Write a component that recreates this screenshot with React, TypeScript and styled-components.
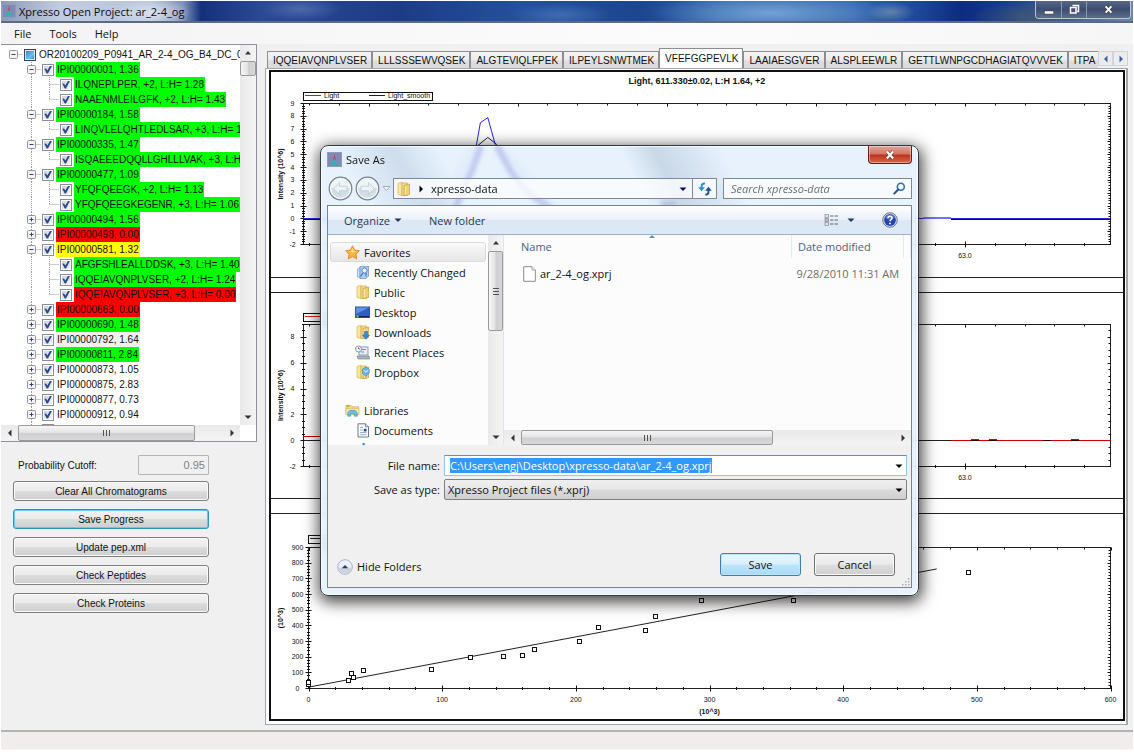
import React, { useLayoutEffect, useRef, useState } from "react";
import styled, { createGlobalStyle, css } from "styled-components";

const sans = `"Liberation Sans", sans-serif`;
const segoe = `"Open Sans", "Noto Sans", sans-serif`;

const GlobalStyle = createGlobalStyle`
  * { box-sizing: border-box; }
  body { margin: 0; background: #fff; font: 10px ${sans}; color: #111; }
  button, input, select { font: inherit; color: inherit; margin: 0; padding: 0; border-radius: 0; }
`;

/* ---------- main window ---------- */

const Window = styled.div`
  position: relative;
  display: flex;
  flex-direction: column;
  padding: 1px 1px 0;
  overflow: hidden;
`;

const TitleBar = styled.header`
  display: flex;
  align-items: center;
  height: 22px;
  padding-left: 1px;
  font: 11px ${segoe};
  border-bottom: 2px solid #5c6a86;
  background:
    radial-gradient(40px 14px at 150px 12px, rgba(220, 228, 240, 0.9), transparent),
    radial-gradient(120px 20px at 770px 12px, rgba(130, 175, 222, 0.8), transparent),
    radial-gradient(24px 10px at 890px 11px, rgba(110, 140, 180, 0.8), transparent),
    radial-gradient(40px 12px at 300px 8px, rgba(90, 120, 185, 0.7), transparent),
    radial-gradient(50px 12px at 560px 14px, rgba(80, 130, 200, 0.6), transparent),
    radial-gradient(60px 16px at 1030px 16px, rgba(70, 90, 110, 0.8), transparent),
    linear-gradient(90deg, #8c9ab4 0, #c3cde0 60px, #b6c3da 150px, #8294bd 182px, #14307c 200px,
      #2a4a94 260px, #1c3c86 400px, #25509c 520px, #1d4590 640px, #2f66ac 720px, #3468b0 850px,
      #1c4696 920px, #0c2c80 960px, #143a8c 1000px, #6f86a8 100%);
`;

const WindowTitle = styled.h1`
  flex: 1;
  margin: 0 0 0 3px;
  font-size: 11px;
  font-weight: 400;
  color: #0a0a14;
`;

const CaptionButtons = styled.div`
  display: flex;
  align-self: flex-start;
  height: 18px;
  margin-right: 2px;
  border: 1px solid #b9c4d6;
  border-top: 0;
  border-radius: 0 0 4px 4px;
  overflow: hidden;
`;

const CaptionButton = styled.button<{ $wide?: boolean }>`
  display: flex;
  align-items: center;
  justify-content: center;
  width: ${(p) => (p.$wide ? 44 : 25)}px;
  border: 0;
  background: linear-gradient(#56678a, #3d4d70 50%, #5d6d8a);
  & + & { border-left: 1px solid #8b98ae; }
`;

const MenuBar = styled.nav`
  display: flex;
  align-items: center;
  height: 21px;
  padding-left: 4px;
  font: 11px ${segoe};
  background: linear-gradient(90deg, #f3f3f5, #fcfcfc 60%, #f6f6f6);
`;

const MenuButton = styled.button`
  border: 0;
  padding: 0 9px;
  background: none;
`;

const Main = styled.main`
  display: grid;
  grid-template-columns: 256px minmax(0, 1fr);
  column-gap: 8px;
  padding-right: 5px;
  background: #f0f0f0;
`;

const StatusBar = styled.footer`
  height: 20px;
  border-top: 2px solid #b4b4b4;
  border-bottom: 1px solid #f7f5f5;
  background: #f0edec;
`;

/* ---------- tree ---------- */

const TreePanel = styled.section`
  display: grid;
  grid-template-columns: minmax(0, 1fr) 16px;
  grid-template-rows: 380px 16px;
  border: 1px solid #8e929c;
  border-left: 0;
  background: #fff;
`;

const TreeList = styled.ul`
  margin: 0;
  padding: 2px 0 0;
  list-style: none;
  overflow: hidden;
`;

const TreeRow = styled.li`
  display: flex;
  align-items: center;
  height: 15px;
  white-space: nowrap;
`;

const Guide = styled.span`
  flex: none;
  display: flex;
`;

const GuideButton = styled.button`
  flex: none;
  display: flex;
  border: 0;
  background: none;
`;

const TreeCheck = styled.input<{ $partial?: boolean }>`
  appearance: none;
  flex: none;
  position: relative;
  width: 12px;
  height: 12px;
  border: 1px solid #8a8f97;
  background: linear-gradient(135deg, #cdd2d8, #f4f5f6);
  box-shadow: inset 0 0 0 1px #fff;
  ${(p) =>
    p.$partial
      ? css`
          border-color: #345;
          background: linear-gradient(135deg, #1c7fb8, #6cc3ea 60%, #2a77a8);
          box-shadow: inset 0 0 0 1px #dfe8ee;
        `
      : css`
          &:checked::after {
            content: "";
            position: absolute;
            inset: 1px;
            background: #2c4a8c;
            clip-path: polygon(4% 42%, 26% 36%, 42% 62%, 78% 0, 100% 4%, 50% 100%, 34% 100%);
          }
        `}
`;

const TreeLabel = styled.label<{ $fill?: string }>`
  height: 15px;
  margin-left: 2px;
  padding: 0 1px;
  line-height: 15px;
  background: ${(p) => p.$fill ?? "transparent"};
`;

/* ---------- scrollbars ---------- */

const ScrollTrack = styled.div<{ $vertical?: boolean }>`
  display: flex;
  flex-direction: ${(p) => (p.$vertical ? "column" : "row")};
  background: ${(p) => (p.$vertical ? "linear-gradient(90deg,#e9e9e9,#f4f4f4)" : "linear-gradient(#e9e9e9,#f4f4f4)")};
`;

const ScrollArrow = styled.button<{ $vertical?: boolean }>`
  flex: none;
  display: flex;
  align-items: center;
  justify-content: center;
  width: ${(p) => (p.$vertical ? 15 : 17)}px;
  height: ${(p) => (p.$vertical ? 16 : 15)}px;
  border: 0;
  background: none;
`;

const ScrollThumb = styled.div<{ $vertical?: boolean; $share: number }>`
  flex: 0 0 ${(p) => p.$share}%;
  display: flex;
  align-items: center;
  justify-content: center;
  border: 1px solid #9a9a9a;
  border-radius: 2px;
  background: linear-gradient(${(p) => (p.$vertical ? "90deg" : "180deg")}, #f6f6f6, #e4e4e6 45%, #cfcfd2 55%, #d8d8da);
`;

const ScrollRest = styled.div`
  flex: 1;
`;

const arrows = {
  up: "M1 5.5 4 2 7 5.5z",
  down: "M.5 2.5 4 6 7.5 2.5z",
  left: "M5.5 0.5 2 4 5.5 7.5z",
  right: "M2.5 0.5 6 4 2.5 7.5z",
};

const Arrow = ({ dir, color = "#333" }: { dir: keyof typeof arrows; color?: string }) => (
  <svg width="8" height="8" viewBox="0 0 8 8">
    <path d={arrows[dir]} fill={color} />
  </svg>
);

const Grip = ({ vertical }: { vertical?: boolean }) => (
  <svg width="8" height="8" viewBox="0 0 8 8">
    <path
      d={vertical ? "M1 1.5h6M1 4.5h6M1 7.5h6" : "M1.5 1v6M4.5 1v6M7.5 1v6"}
      stroke="#555"
      strokeWidth="1"
    />
  </svg>
);

const Scrollbar = ({ vertical, share }: { vertical?: boolean; share: number }) => (
  <ScrollTrack $vertical={vertical}>
    <ScrollArrow type="button" $vertical={vertical} aria-label={vertical ? "Scroll up" : "Scroll left"}>
      <Arrow dir={vertical ? "up" : "left"} />
    </ScrollArrow>
    <ScrollThumb $vertical={vertical} $share={share}>
      {share > 10 && <Grip vertical={vertical} />}
    </ScrollThumb>
    <ScrollRest />
    <ScrollArrow type="button" $vertical={vertical} aria-label={vertical ? "Scroll down" : "Scroll right"}>
      <Arrow dir={vertical ? "down" : "right"} />
    </ScrollArrow>
  </ScrollTrack>
);

type Node = { level: 0 | 1 | 2; text: string; fill?: string; open?: boolean; last?: boolean };

const green = "#00ff00";
const red = "#ff0000";

const nodes: Node[] = [
  { level: 0, text: "OR20100209_P0941_AR_2-4_OG_B4_DC_0", open: true },
  { level: 1, text: "IPI00000001, 1.36", fill: green, open: true },
  { level: 2, text: "ILQNEPLPER, +2, L:H= 1.28", fill: green },
  { level: 2, text: "NAAENMLEILGFK, +2, L:H= 1.43", fill: green, last: true },
  { level: 1, text: "IPI00000184, 1.58", fill: green, open: true },
  { level: 2, text: "LINQVLELQHTLEDLSAR, +3, L:H= 1", fill: green, last: true },
  { level: 1, text: "IPI00000335, 1.47", fill: green, open: true },
  { level: 2, text: "ISQAEEEDQQLLGHLLLVAK, +3, L:H", fill: green, last: true },
  { level: 1, text: "IPI00000477, 1.09", fill: green, open: true },
  { level: 2, text: "YFQFQEEGK, +2, L:H= 1.13", fill: green },
  { level: 2, text: "YFQFQEEGKEGENR, +3, L:H= 1.06", fill: green, last: true },
  { level: 1, text: "IPI00000494, 1.56", fill: green },
  { level: 1, text: "IPI00000498, 0.00", fill: red },
  { level: 1, text: "IPI00000581, 1.32", fill: "#ffff00", open: true },
  { level: 2, text: "AFGFSHLEALLDDSK, +3, L:H= 1.40", fill: green },
  { level: 2, text: "IQQEIAVQNPLVSER, +2, L:H= 1.24", fill: green },
  { level: 2, text: "IQQEIAVQNPLVSER, +3, L:H= 0.00", fill: red, last: true },
  { level: 1, text: "IPI00000663, 0.00", fill: red },
  { level: 1, text: "IPI00000690, 1.48", fill: green },
  { level: 1, text: "IPI00000792, 1.64", fill: "#f0f0f0" },
  { level: 1, text: "IPI00000811, 2.84", fill: green },
  { level: 1, text: "IPI00000873, 1.05" },
  { level: 1, text: "IPI00000875, 2.83" },
  { level: 1, text: "IPI00000877, 0.73" },
  { level: 1, text: "IPI00000912, 0.94" },
  { level: 1, text: "" },
];

const guideWidth = [23, 41, 59];

const GuideLines = ({ node }: { node: Node }) => {
  const x = [12.5, 30.5, 48.5][node.level];
  const line = { stroke: "#9a9a9a", strokeDasharray: "1 1" };
  return (
    <svg width={guideWidth[node.level]} height="15">
      {node.level > 0 && <path d="M30.5 0v15" {...line} />}
      {node.level === 2 && <path d={`M48.5 0v${node.last ? 8 : 15}`} {...line} />}
      <path d={`M${x} 7.5h9`} {...line} />
      {node.level < 2 && (
        <>
          <rect x={x - 4} y="3.5" width="8" height="8" rx="1" fill="#f4f4f4" stroke="#959595" />
          <path d={`M${x - 2} 7.5h4${node.open ? "" : "m-2 -2v4"}`} stroke="#2a4480" />
        </>
      )}
    </svg>
  );
};

const Tree = () => (
  <TreePanel aria-label="Proteins">
    <TreeList>
      {nodes.map((node, i) => (
        <TreeRow key={i}>
          {node.level < 2 ? (
            <GuideButton aria-label={node.open ? "Collapse" : "Expand"}>
              <GuideLines node={node} />
            </GuideButton>
          ) : (
            <Guide>
              <GuideLines node={node} />
            </Guide>
          )}
          <TreeCheck
            type="checkbox"
            id={`node-${i}`}
            aria-label={node.text || "Protein"}
            defaultChecked={node.level > 0}
            $partial={node.level === 0}
          />
          {node.text && (
            <TreeLabel htmlFor={`node-${i}`} $fill={node.fill}>
              {node.text}
            </TreeLabel>
          )}
        </TreeRow>
      ))}
    </TreeList>
    <Scrollbar vertical share={4} />
    <Scrollbar share={74} />
  </TreePanel>
);

/* ---------- left controls ---------- */

const Controls = styled.form`
  display: grid;
  gap: 8px;
  padding: 13px 48px 0 12px;
`;

const CutoffRow = styled.div`
  display: flex;
  align-items: center;
  justify-content: space-between;
  height: 20px;
  margin-bottom: -2px;
  padding-left: 5px;
`;

const CutoffInput = styled.input`
  width: 71px;
  height: 20px;
  padding-right: 3px;
  border: 1px solid #b4b4b4;
  border-radius: 1px;
  background: #f0f0f0;
  color: #808080;
  font-size: 11px;
  text-align: right;
`;

const PushButton = styled.button<{ $focus?: boolean }>`
  height: 20px;
  border: 1px solid ${(p) => (p.$focus ? "#2a93c0" : "#808080")};
  border-radius: 3px;
  background: linear-gradient(#f3f3f3, #ebebeb 48%, #dcdcdc 52%, #cecece);
  box-shadow: inset 0 0 0 1px ${(p) => (p.$focus ? "#5fcdf0" : "#fafafa")};
`;

/* ---------- tabs ---------- */

const Workspace = styled.section`
  display: flex;
  flex-direction: column;
  padding: 4px 0 5px;
`;

const TabStrip = styled.div`
  display: flex;
  align-items: flex-end;
  height: 20px;
  padding-left: 2px;
`;

const TabClip = styled.div`
  flex: 1;
  display: flex;
  align-items: flex-end;
  overflow: hidden;
`;

const Tab = styled.button<{ $active?: boolean }>`
  flex: none;
  height: ${(p) => (p.$active ? 20 : 17)}px;
  padding: 0 4px 0 5px;
  border: 1px solid #8c8e94;
  border-bottom: 0;
  & + & { border-left-width: ${(p) => (p.$active ? 1 : 0)}px; }
  background: ${(p) => (p.$active ? "#fff" : "linear-gradient(#f4f4f4, #ececec 50%, #dedede 55%, #dadada)")};
`;

const TabScroll = styled.button`
  flex: none;
  display: flex;
  align-items: center;
  justify-content: center;
  width: 15px;
  height: 15px;
  margin-bottom: 2px;
  border: 1px solid #cfd3da;
  background: #ececef;
`;

const TabPanel = styled.div`
  padding: 1px 1px 3px 3px;
  border: 1px solid #a2a5ad;
  border-right-width: 2px;
  background: #fff;
`;

const Frame = styled.div`
  display: grid;
  gap: 14px;
  border: 2px solid #111;
`;

const ChartCell = styled.div`
  height: 206px;
  border-bottom: 1px solid #222;
  & + & { height: 207px; border-top: 1px solid #222; }
  & + &:last-child { height: 206px; border-bottom: 0; }
  svg { display: block; }
`;

const tabs = [
  "IQQEIAVQNPLVSER",
  "LLLSSSEWVQSEK",
  "ALGTEVIQLFPEK",
  "ILPEYLSNWTMEK",
  "VFEFGGPEVLK",
  "LAAIAESGVER",
  "ALSPLEEWLR",
  "GETTLWNPGCDHAGIATQVVVEK",
  "ITPA",
];

/* ---------- charts ---------- */

type Axis = { min: number; max: number; major: number; parts: number; labels: number[]; digits?: number };
type Scale = (v: number) => number;

type ChartProps = {
  x: Axis;
  y: Axis;
  left: number;
  top: number;
  bottom: number;
  title?: string;
  yTitle: string;
  xTitle?: string;
  legend?: React.ReactNode;
  legendWidth: number;
  legendTop: number;
  plot: (sx: Scale, sy: Scale) => React.ReactNode;
};

const ticks = (a: Axis) => {
  const step = a.major / a.parts;
  const out: { v: number; major: boolean }[] = [];
  for (let i = Math.ceil(a.min / step - 1e-6); i * step <= a.max + 1e-6; i++) {
    out.push({ v: i * step, major: i % a.parts === 0 });
  }
  return out;
};

const Chart = ({ x, y, left, top, bottom, title, yTitle, xTitle, legend, legendWidth, legendTop, plot }: ChartProps) => {
  const ref = useRef<HTMLDivElement>(null);
  const [width, setWidth] = useState(851);
  useLayoutEffect(() => {
    const el = ref.current;
    if (!el) return;
    const measure = () => setWidth(el.clientWidth);
    measure();
    const ro = new ResizeObserver(measure);
    ro.observe(el);
    return () => ro.disconnect();
  }, []);

  const right = width - 12.5;
  const sx: Scale = (v) => left + ((v - x.min) / (x.max - x.min)) * (right - left);
  const sy: Scale = (v) => bottom - ((v - y.min) / (y.max - y.min)) * (bottom - top);
  const mid = (left + right) / 2;
  const yMid = (top + bottom) / 2;
  const xTicks = ticks(x)
    .map(({ v, major }) => {
      const p = Math.round(sx(v)) + 0.5;
      const n = major ? 3 : 1.5;
      return `M${p} ${bottom - n}V${bottom + n}M${p} ${top}v${major ? 3 : 2}`;
    })
    .join("");
  const yTicks = ticks(y)
    .map(({ v, major }) => {
      const p = Math.floor(sy(v)) + 0.5;
      const n = major ? 3 : 1.5;
      return `M${left - n} ${p}H${left + n}M${right} ${p}h${major ? -3 : -2}`;
    })
    .join("");

  return (
    <ChartCell ref={ref}>
      <svg width={width} height="205" fontFamily={sans} fontSize="7" fill="#111">
        <rect x={left} y={top} width={right - left} height={bottom - top} fill="none" stroke="#222" />
        <path d={xTicks + yTicks} stroke="#111" fill="none" />
        {plot(sx, sy)}
        <rect x={left} y={legendTop} width={legendWidth} height="8" fill="#fff" stroke="#111" />
        {legend}
        {title && (
          <text x={mid - 10} y="12" fontSize="9" fontWeight="700" textAnchor="middle">
            {title}
          </text>
        )}
        {x.labels.map((v) => (
          <text key={v} x={sx(v)} y={bottom + 13} textAnchor="middle">
            {v.toFixed(x.digits ?? 0)}
          </text>
        ))}
        {y.labels.map((v) => (
          <text key={v} x={left - 11} y={sy(v) + 2} textAnchor="middle">
            {v}
          </text>
        ))}
        <text transform={`translate(12 ${yMid}) rotate(-90)`} fontWeight="700" textAnchor="middle">
          {yTitle}
        </text>
        {xTitle && (
          <text x={mid} y={bottom + 25} fontWeight="700" textAnchor="middle">
            {xTitle}
          </text>
        )}
      </svg>
    </ChartCell>
  );
};

const timeAxis: Axis = { min: 60.782, max: 63.488, major: 0.5, parts: 5, labels: [63], digits: 1 };

const points = [
  [0, 20], [0, 35], [30.1, 49], [32.4, 90], [34.3, 65], [41.4, 110], [92.6, 119], [121.4, 192],
  [146.4, 199], [160.3, 205], [169.6, 245], [203.1, 299], [217.4, 389], [252.3, 365], [260.1, 454],
  [294.4, 557], [363.1, 557], [494.2, 736],
];

const path = (data: number[][], sx: Scale, sy: Scale) => "M" + data.map(([a, b]) => `${sx(a)} ${sy(b)}`).join("L");

const Charts = () => (
  <Frame>
    <Chart
      x={timeAxis}
      y={{ min: -2, max: 9, major: 1, parts: 5, labels: [9, 8, 7, 6, 5, 4, 3, 2, 1, 0, -1, -2] }}
      left={32.5}
      top={31.5}
      bottom={172.5}
      title="Light, 611.330±0.02, L:H 1.64, +2"
      yTitle="Intensity (10^6)"
      legendWidth={129}
      legendTop={20.5}
      legend={
        <>
          <path d="M34 23.5h16" stroke="#3c3cff" />
          <path d="M98 23.5h16" stroke="#222" />
          <text x="53" y="26">Light</text>
          <text x="117" y="26">Light_smooth</text>
        </>
      }
      plot={(sx, sy) => {
        const zero = Math.floor(sy(0));
        return (
          <>
            <path d={path([[61.21, 0.1], [61.36, 5.6], [61.4, 6.35], [61.43, 5.8], [61.65, 0.2]], sx, sy)} fill="none" stroke="#222" />
            <path d={path([[61.22, 0.1], [61.36, 5.5], [61.375, 7.5], [61.4, 7.9], [61.425, 5.8], [61.62, 0.4]], sx, sy)} fill="none" stroke="#2222ff" />
            <path d={`M${sx(60.782)} ${zero + 0.5}H${sx(63.488)}`} stroke="#2a2af0" />
            <path d={`M${sx(60.782)} ${zero + 1.5}h80M${sx(62.953)} ${zero + 1.5}H${sx(63.488)}`} stroke="#00003c" />
            <path d={`M${sx(62.86)} ${zero}H${sx(62.953)}`} stroke="#7070ff" strokeWidth="2" />
          </>
        );
      }}
    />
    <Chart
      x={timeAxis}
      y={{ min: -2, max: 9, major: 2, parts: 4, labels: [8, 6, 4, 2, 0, -2] }}
      left={32.5}
      top={31.5}
      bottom={173.5}
      yTitle="Intensity (10^6)"
      legendWidth={129}
      legendTop={20.5}
      legend={<path d="M34 23.5h16" stroke="#e22" />}
      plot={(sx, sy) => {
        const zero = Math.floor(sy(0));
        return (
          <>
            <path d={`M${sx(60.782)} ${zero + 0.5}H${sx(63.488)}`} stroke="#222" />
            <path d={`M${sx(60.782)} ${zero - 3.5}h18M${sx(62.953)} ${zero + 0.5}H${sx(63.488)}`} stroke="#d00000" />
            <path d={`M${sx(63.02)} ${zero - 0.5}h8m10 0h8m74 0h8`} stroke="#d00000" />
            <path d={`M${sx(63.02)} ${zero + 0.5}h8m10 0h8m46 0h8m20 0h8`} stroke="#300" />
          </>
        );
      }}
    />
    <Chart
      x={{ min: 0, max: 600, major: 100, parts: 5, labels: [0, 100, 200, 300, 400, 500, 600] }}
      y={{ min: 0, max: 900, major: 100, parts: 5, labels: [900, 800, 700, 600, 500, 400, 300, 200, 100, 0] }}
      left={37.5}
      top={33.5}
      bottom={174.5}
      yTitle="(10^3)"
      xTitle="(10^3)"
      legendWidth={60}
      legendTop={21.5}
      legend={<path d="M39 24.5h14" stroke="#222" />}
      plot={(sx, sy) => (
        <>
          <path d={path([[1, 10], [470, 763]], sx, sy)} stroke="#222" fill="none" />
          {points.map(([a, b], i) => (
            <rect key={i} x={Math.round(sx(a)) - 2.5} y={Math.round(sy(b)) - 2.5} width="4" height="4" fill="#fff" stroke="#111" />
          ))}
        </>
      )}
    />
  </Frame>
);

/* ---------- dialog ---------- */

const Dialog = styled.div`
  position: absolute;
  left: 320px;
  top: 145px;
  display: flex;
  flex-direction: column;
  width: 599px;
  padding: 0 6px 7px;
  border: 1px solid #333a44;
  border-radius: 8px;
  font: 11px ${segoe};
  background:
    linear-gradient(62deg, transparent 0, transparent 290px, rgba(165, 185, 205, 0.45) 320px, rgba(185, 200, 218, 0.35) 350px, transparent 380px) no-repeat 0 0 / 100% 60px,
    linear-gradient(60deg, transparent 40px, rgba(170, 190, 210, 0.4) 90px, transparent 130px) no-repeat 0 0 / 100% 60px,
    rgba(226, 239, 252, 0.82);
  backdrop-filter: blur(4px);
  box-shadow: inset 0 0 0 1px rgba(255, 255, 255, 0.7), 1px 4px 16px 2px rgba(0, 0, 0, 0.75);
`;

const GlassTint = styled.span`
  position: absolute;
  inset: 0 0 auto 0;
  height: 60px;
  overflow: hidden;
  pointer-events: none;
`;

const DialogTitleRow = styled.div`
  position: relative;
  display: flex;
  align-items: flex-start;
  gap: 4px;
  height: 32px;
  svg { flex: none; }
`;

const AppIconSlot = styled.span`
  display: flex;
  padding-top: 6px;
`;

const DialogTitle = styled.h2`
  flex: 1;
  margin: 0;
  padding-top: 6px;
  font-size: 11px;
  line-height: 15px;
  font-weight: 400;
`;

const CloseButton = styled.button`
  display: flex;
  align-items: center;
  justify-content: center;
  width: 44px;
  height: 18px;
  border: 1px solid #5e2018;
  border-top: 0;
  border-radius: 0 0 4px 4px;
  background: linear-gradient(#e0a79c, #d2745f 48%, #b8331c 52%, #d9664a);
  box-shadow: inset 0 0 0 1px rgba(255, 220, 210, 0.5);
`;

const NavRow = styled.div`
  position: relative;
  display: flex;
  align-items: center;
  height: 21px;
  margin-bottom: 6px;
`;

const NavArrows = styled.div`
  display: flex;
  width: 66px;
  margin: -2px 0;
  svg { display: block; }
`;

const RoundButton = styled.button`
  display: flex;
  border: 0;
  background: none;
`;

const AddressBar = styled.div`
  flex: 1;
  display: flex;
  align-items: center;
  height: 21px;
  margin-right: 6px;
  padding-left: 3px;
  border: 1px solid #7d8896;
  background: rgba(255, 255, 255, 0.75);
`;

const Crumb = styled.button`
  flex: 1;
  display: flex;
  align-items: center;
  gap: 6px;
  border: 0;
  background: none;
  text-align: left;
`;

const AddressButton = styled.button<{ $divided?: boolean }>`
  display: flex;
  align-items: center;
  justify-content: center;
  width: ${(p) => (p.$divided ? 24 : 18)}px;
  height: 19px;
  border: 0;
  border-left: ${(p) => (p.$divided ? "1px solid #7d8896" : "0")};
  background: none;
`;

const SearchBox = styled.div`
  display: flex;
  align-items: center;
  width: 189px;
  height: 21px;
  padding: 0 5px 0 7px;
  border: 1px solid #7d8896;
  background: rgba(255, 255, 255, 0.75);
`;

const SearchInput = styled.input`
  flex: 1;
  min-width: 0;
  border: 0;
  outline: 0;
  background: none;
  &::placeholder { color: #6e6e6e; font-style: italic; opacity: 1; }
`;

const DialogBody = styled.div`
  position: relative;
  border: 1px solid #7b828c;
  background: #f0f0f0;
`;

const Toolbar = styled.div`
  display: flex;
  align-items: center;
  height: 29px;
  padding: 0 13px 0 16px;
  color: #1e395b;
  border-bottom: 1px solid #a0afc3;
  background: linear-gradient(#fdfeff, #eaf1fb 48%, #dce7f5 52%, #dde9f7);
`;

const ToolButton = styled.button`
  display: flex;
  align-items: center;
  gap: 4px;
  margin-right: 27px;
  border: 0;
  background: none;
`;

const ViewButton = styled(ToolButton)`
  gap: 8px;
`;

const ToolSpace = styled.div`
  flex: 1;
`;

const Browser = styled.div`
  display: grid;
  grid-template-columns: 176px minmax(0, 1fr);
  height: 210px;
  background: #fcfcfc;
`;

const NavPane = styled.div`
  display: grid;
  grid-template-columns: minmax(0, 1fr) 15px;
  height: 210px;
  border-right: 1px solid #d9e6f6;
`;

const Places = styled.ul`
  height: 210px;
  margin: 0;
  padding: 7px 2px 0;
  list-style: none;
  overflow: hidden;
`;

const Place = styled.li<{ $head?: boolean; $current?: boolean; $spaced?: boolean }>`
  height: 20px;
  margin-top: ${(p) => (p.$spaced ? 18 : 0)}px;
  padding-left: ${(p) => (p.$head ? 14 : 24)}px;
  border: 1px solid ${(p) => (p.$current ? "#dadada" : "transparent")};
  border-radius: 3px;
  background: ${(p) => (p.$current ? "linear-gradient(#fafafa, #e6e6e6)" : "none")};
`;

const PlaceLink = styled.a`
  display: flex;
  align-items: center;
  gap: 4px;
  height: 18px;
  color: #111;
  text-decoration: none;
`;

const IconSlot = styled.span`
  display: flex;
  justify-content: center;
  width: 15px;
`;

const FilePane = styled.div`
  display: grid;
  grid-template-rows: minmax(0, 1fr) 15px;
  height: 210px;
`;

const FileTable = styled.table`
  align-self: start;
  width: 100%;
  border-collapse: collapse;
  table-layout: fixed;
`;

const HeadCell = styled.th<{ $width?: number; $first?: boolean }>`
  position: relative;
  width: ${(p) => (p.$width ? `${p.$width}px` : "auto")};
  height: 23px;
  padding: 0 0 0 ${(p) => (p.$first ? 17 : 6)}px;
  border-right: 1px solid #e3eaf3;
  font-weight: 400;
  text-align: left;
  color: #4c607a;
`;

const SortMark = styled.span`
  position: absolute;
  top: -1px;
  left: 50%;
  display: flex;
`;

const FileCell = styled.td<{ $muted?: boolean }>`
  height: 31px;
  padding: 0 0 0 ${(p) => (p.$muted ? 5 : 19)}px;
  color: ${(p) => (p.$muted ? "#6d6d6d" : "#111")};
  white-space: nowrap;
`;

const FileName = styled.span`
  display: flex;
  align-items: center;
  gap: 4px;
`;

const SaveForm = styled.form`
  display: grid;
  grid-template-columns: 112px minmax(0, 1fr);
  gap: 3px 4px;
  padding: 10px 4px 0 0;
`;

const FieldLabel = styled.label`
  line-height: 21px;
  text-align: right;
`;

const NameBox = styled.div`
  display: flex;
  align-items: center;
  justify-content: space-between;
  height: 21px;
  padding: 0 3px 0 5px;
  border: 1px solid #9cc4e4;
  border-top-color: #5794bf;
  background: #fff;
`;

const NameInput = styled.input`
  field-sizing: content;
  height: 15px;
  border: 0;
  outline: 0;
  background: #3399ff;
  color: #fff;
`;

const DropButton = styled.button`
  display: flex;
  border: 0;
  background: none;
`;

const TypeBox = styled.div`
  display: flex;
  align-items: center;
  height: 21px;
  padding-right: 3px;
  border: 1px solid #808080;
  border-radius: 2px;
  background: linear-gradient(#f0f0f0, #e8e8e8 48%, #dadada 52%, #cfcfcf);
`;

const TypeSelect = styled.select`
  appearance: none;
  flex: 1;
  height: 19px;
  padding-left: 3px;
  border: 0;
  background: none;
`;

const DialogFooter = styled.div`
  display: flex;
  align-items: center;
  gap: 13px;
  padding: 53px 16px 11px 9px;
`;

const HideFolders = styled.button`
  display: flex;
  align-items: center;
  gap: 4px;
  margin: 4px auto 0 0;
  border: 0;
  background: none;
`;

const DialogButton = styled.button<{ $primary?: boolean }>`
  width: 81px;
  height: 23px;
  border: 1px solid ${(p) => (p.$primary ? "#3c7fb1" : "#707070")};
  border-radius: 3px;
  background: ${(p) =>
    p.$primary
      ? "linear-gradient(#eaf6fd, #d9f0fc 48%, #bee6fd 52%, #a7d9f5)"
      : "linear-gradient(#f2f2f2, #ebebeb 48%, #dddddd 52%, #cfcfcf)"};
  box-shadow: inset 0 0 0 1px ${(p) => (p.$primary ? "#bfe6f8" : "#fafafa")};
`;

const ResizeGrip = styled.span`
  position: absolute;
  right: 1px;
  bottom: 1px;
  display: flex;
`;

/* ---------- icons ---------- */

const AppIcon = ({ size = 15 }: { size?: number }) => (
  <svg width={size} height={size} viewBox="0 0 15 15">
    <rect width="15" height="15" fill="#8189b4" />
    <rect x=".5" y=".5" width="14" height="14" fill="none" stroke="#8f9ac6" />
    <path d="M7.5 2 8.8 8H6.2z" fill="#c0424a" />
    <path d="M7.5 6 10.8 13.5h-6.6z" fill="#2fb5b0" />
  </svg>
);

const FolderIcon = ({ children }: { children?: React.ReactNode }) => (
  <svg width="14" height="16" viewBox="0 0 14 16">
    <path d="M1 2.5 5 1v13.5l-4-1z" fill="#f6e7a0" stroke="#d9b95a" strokeWidth=".7" />
    <path d="M5 2h5.5v12.5H5z" fill="#f3dd86" stroke="#d2ae4c" strokeWidth=".7" />
    <path d="M7 4.5 12.5 3v10.5L7 14.6z" fill="#f0d168" stroke="#c89f3a" strokeWidth=".7" />
    <path d="M8.4 5v8.6" stroke="#faeeb8" strokeWidth="1" />
    {children}
  </svg>
);

const StarIcon = () => (
  <svg width="15" height="15" viewBox="0 0 15 15">
    <path d="M7.5.8 9.6 5.2l4.8.6-3.5 3.3.9 4.9-4.3-2.4-4.3 2.4.9-4.9L.6 5.8l4.8-.6z" fill="#fbb63c" stroke="#e2812a" strokeWidth=".9" />
    <path d="M7.5 2.8 8.9 6l3 .5-4.4 1-3.6-.9L6.2 6z" fill="#ffe28a" />
  </svg>
);

const RecentIcon = () => (
  <svg width="14" height="15" viewBox="0 0 14 15">
    <path d="M1.5 4 4 2.5v10L1.5 12z" fill="#d4e4f6" stroke="#86a6cc" strokeWidth=".8" />
    <path d="M4 1.5h8.5v9.5L10 13.5H4z" fill="#b4cfee" stroke="#7396c4" strokeWidth=".8" />
    <circle cx="8.5" cy="5.5" r="2.6" fill="#eef6ff" stroke="#4f80bb" />
    <path d="M7 8 4.5 11.5M10 8v3.5" stroke="#4f80bb" strokeWidth="1.3" />
  </svg>
);

const DesktopIcon = () => (
  <svg width="15" height="13" viewBox="0 0 15 13">
    <rect x=".5" y="1" width="14" height="10.5" fill="#2a5fc4" stroke="#3c5590" />
    <path d="M1 1.5h13L1 8z" fill="#5c93e4" />
    <path d="M1 10h13v1.2H1z" fill="#16264e" />
    <path d="M1.5 9.5h2v1.8h-2z" fill="#7fd85f" />
  </svg>
);

const PlacesIcon = () => (
  <svg width="15" height="15" viewBox="0 0 15 15">
    <rect x="4" y="2" width="9" height="8" fill="#e6eef4" stroke="#8fa0ad" />
    <path d="M6 4.5h5M6 7h3" stroke="#4d9fc8" />
    <path d="M2 11h12l.5 3H3z" fill="#aab2ba" stroke="#7e868e" strokeWidth=".7" />
    <circle cx="3.5" cy="4" r="3" fill="#f4f7fa" stroke="#8b98a4" />
    <path d="M3.5 2.3V4h1.5" stroke="#556" strokeWidth=".8" fill="none" />
  </svg>
);

const LibraryIcon = () => (
  <svg width="15" height="15" viewBox="0 0 16 15">
    <path d="M1 2h5l1 1.5h7.5V11H1z" fill="#f2dc84" stroke="#c9a644" strokeWidth=".7" />
    <path d="M1 5.5h14V12H1z" fill="#f8e9a6" stroke="#d2b04e" strokeWidth=".6" />
    <path d="M2 2.8h2.5" stroke="#4cae4a" strokeWidth="1.2" />
    <path d="M3 13.5v-3.5l2-2.5h6l2 2.5v3.5h-3v-2.5H6v2.5z" fill="#6fbde4" stroke="#3b8fbe" strokeWidth=".7" />
  </svg>
);

const DocumentsIcon = () => (
  <svg width="14" height="15" viewBox="0 0 14 15">
    <path d="M2 .8h7.5l3 3V14H2z" fill="#fdfdfd" stroke="#6c7a8a" />
    <path d="M9.5.8v3h3" fill="#d8e0ea" stroke="#6c7a8a" strokeWidth=".8" />
    <path d="M4 4.5h3M4 7h3M4 9.5h6.5M4 11.7h6.5" stroke="#8aa4c6" strokeWidth=".9" />
    <rect x="7.8" y="5.8" width="2.7" height="2.7" fill="#1d4f9c" />
  </svg>
);

const MusicIcon = () => (
  <svg width="14" height="15" viewBox="0 0 14 15">
    <path d="M7.5 0v9" stroke="#2e8ad0" strokeWidth="2" />
    <path d="M7.5 0 11 4l-3.5-1z" fill="#2e8ad0" />
  </svg>
);

const FileIcon = () => (
  <svg width="13" height="16" viewBox="0 0 13 16">
    <path d="M.7.7h8.3l3.3 3.3v11.3H.7z" fill="#fff" stroke="#8b8b8b" />
    <path d="M9 .7V4h3.3" fill="#eee" stroke="#9b9b9b" strokeWidth=".8" />
  </svg>
);

const RefreshIcon = () => (
  <svg width="14" height="14" viewBox="0 0 13 13">
    <path d="M6.5 1.5Q3.3 1.2 3.3 4v2" fill="none" stroke="#2c8fd0" strokeWidth="1.8" />
    <path d="M.2 4.8h6.2L3.3 8.6z" fill="#2c8fd0" />
    <path d="M6.8 11.7Q9.7 11.8 9.7 9V7" fill="none" stroke="#1c4f9c" strokeWidth="1.8" />
    <path d="M6.6 8.2h6.2L9.7 4.4z" fill="#1c4f9c" />
  </svg>
);

const MagnifierIcon = () => (
  <svg width="13" height="13" viewBox="0 0 13 13">
    <circle cx="7.8" cy="4.8" r="3.5" fill="#f1f8ff" stroke="#2673b8" strokeWidth="1.6" />
    <path d="M5.2 7.5 1.2 11.6" stroke="#2a4f90" strokeWidth="2" strokeLinecap="round" />
  </svg>
);

const ViewIcon = () => (
  <svg width="15" height="13" viewBox="0 0 15 13">
    {[1, 5, 9].map((y) => (
      <g key={y}>
        <rect x="1" y={y - 0.5} width="3.5" height="3" fill={y === 5 ? "#e8a9a0" : "#dfe6ee"} stroke="#8b97a6" strokeWidth=".8" />
        <path d={`M6 ${y + 1}h3.5m1 0H14`} stroke="#5b6b80" />
      </g>
    ))}
  </svg>
);

const HelpIcon = () => (
  <svg width="16" height="16" viewBox="0 0 16 16">
    <circle cx="8" cy="8" r="7.3" fill="#d6dbe6" stroke="#6d7890" />
    <circle cx="8" cy="8" r="5.9" fill="#2445ae" />
    <path d="M3 6a5.3 5.3 0 0 1 10 0Q8 8.5 3 6z" fill="#5e85da" opacity=".7" />
    <path d="M6 6.3Q6 4.3 8 4.3t2 1.8Q10 7.2 8.7 7.9 8 8.3 8 9.3" fill="none" stroke="#fff" strokeWidth="1.5" />
    <circle cx="8" cy="11.4" r=".95" fill="#fff" />
  </svg>
);

const CircleArrow = ({ flip }: { flip?: boolean }) => (
  <svg width="27" height="25" viewBox="0 0 27 25">
    <circle cx="13.5" cy="12.5" r="11.3" fill="#e6edf3" stroke="#76828f" strokeWidth="1.2" />
    <circle cx="13.5" cy="12.5" r="9.9" fill="#d3dde6" stroke="#fff" strokeWidth="1" />
    <path d="M4 12a9.5 9.5 0 0 1 19 0z" fill="#eff4f8" />
    <path
      d={flip ? "M20.5 12.5 14.5 6.8v3.4H7v4.6h7.5v3.4z" : "M6.5 12.5l6-5.7v3.4H20v4.6h-7.5v3.4z"}
      fill="#eef3f7"
      stroke="#bcc8d3"
      strokeWidth=".8"
    />
  </svg>
);

const HideIcon = () => (
  <svg width="16" height="16" viewBox="0 0 16 16">
    <circle cx="8" cy="8" r="7.3" fill="#eef1f6" stroke="#a4b0d2" />
    <path d="M1.5 8.5a6.5 6.5 0 0 0 13 0z" fill="#cfd6da" />
    <path d="M4.8 9.3 8 6l3.2 3.3z" fill="#1d3a9c" />
  </svg>
);

const GripIcon = () => (
  <svg width="9" height="9" viewBox="0 0 9 9" fill="#b0b0b0">
    <path d="M7 1h1.5v1.5H7zM4 4h1.5v1.5H4zM7 4h1.5v1.5H7zM1 7h1.5v1.5H1zM4 7h1.5v1.5H4zM7 7h1.5v1.5H7z" />
  </svg>
);

const CloseGlyph = ({ size }: { size: number }) => (
  <svg width={size} height={size} viewBox="0 0 10 10">
    <path d="M1.8 1.5 8.2 8.5M8.2 1.5 1.8 8.5" stroke="#44302e" strokeWidth="3.6" opacity=".6" />
    <path d="M1.8 1.5 8.2 8.5M8.2 1.5 1.8 8.5" stroke="#fff" strokeWidth="2.2" />
  </svg>
);

/* The chromatogram peak showing softly through the glass above the dialog body. */
const PeakThroughGlass = () => (
  <GlassTint>
    <svg width="400" height="60">
      <defs>
        <filter id="glass-blur" x="-20%" y="-20%" width="140%" height="140%">
          <feGaussianBlur stdDeviation="2" />
        </filter>
      </defs>
      <g filter="url(#glass-blur)" fill="none" stroke="#8f96d8" strokeWidth="6" opacity=".45">
        <path d="M160 0 152 22 134 62" />
        <path d="M176 0 190 26 206 46 232 64" />
        <path d="M340 58h15" />
      </g>
    </svg>
  </GlassTint>
);

const places = [
  { name: "Favorites", icon: <StarIcon />, head: true, current: true },
  { name: "Recently Changed", icon: <RecentIcon /> },
  { name: "Public", icon: <FolderIcon /> },
  { name: "Desktop", icon: <DesktopIcon /> },
  {
    name: "Downloads",
    icon: (
      <FolderIcon>
        <path d="M8.5 7.5h3V11h2L10 15.3 6.5 11h2z" fill="#2d8fe0" stroke="#1c6ab4" strokeWidth=".5" />
      </FolderIcon>
    ),
  },
  { name: "Recent Places", icon: <PlacesIcon /> },
  {
    name: "Dropbox",
    icon: (
      <FolderIcon>
        <path d="M6.5 5 9.8 3l3.5 2v4l-3.5 3.5L6.5 9z" fill="#6db4e6" stroke="#3b86bf" strokeWidth=".6" />
        <path d="M7.5 6 9.8 8 12.5 6" stroke="#e4f3fd" fill="none" />
      </FolderIcon>
    ),
  },
  { name: "Libraries", icon: <LibraryIcon />, head: true, spaced: true },
  { name: "Documents", icon: <DocumentsIcon /> },
  { name: "", icon: <MusicIcon /> },
];

const SaveAsDialog = () => (
  <Dialog role="dialog" aria-labelledby="save-title">
    <PeakThroughGlass />
    <DialogTitleRow>
      <AppIconSlot>
        <AppIcon />
      </AppIconSlot>
      <DialogTitle id="save-title">Save As</DialogTitle>
      <CloseButton aria-label="Close dialog">
        <CloseGlyph size={10} />
      </CloseButton>
    </DialogTitleRow>
    <NavRow>
      <NavArrows>
        <RoundButton aria-label="Back">
          <CircleArrow />
        </RoundButton>
        <RoundButton aria-label="Forward">
          <CircleArrow flip />
        </RoundButton>
        <RoundButton aria-label="Recent pages">
          <svg width="10" height="25">
            <path d="M2 10.5h7l-3.5 4z" fill="#f4f8fb" stroke="#a3b0bd" />
          </svg>
        </RoundButton>
      </NavArrows>
      <AddressBar>
        <Crumb>
          <FolderIcon />
          <Arrow dir="right" color="#000" />
          xpresso-data
        </Crumb>
        <AddressButton aria-label="Previous locations">
          <Arrow dir="down" color="#00105c" />
        </AddressButton>
        <AddressButton aria-label="Refresh" $divided>
          <RefreshIcon />
        </AddressButton>
      </AddressBar>
      <SearchBox>
        <SearchInput aria-label="Search" placeholder="Search xpresso-data" />
        <MagnifierIcon />
      </SearchBox>
    </NavRow>
    <DialogBody>
      <Toolbar>
        <ToolButton>
          Organize
          <Arrow dir="down" color="#1e395b" />
        </ToolButton>
        <ToolButton>New folder</ToolButton>
        <ToolSpace />
        <ViewButton aria-label="Change your view">
          <ViewIcon />
          <Arrow dir="down" color="#1e395b" />
        </ViewButton>
        <RoundButton aria-label="Help">
          <HelpIcon />
        </RoundButton>
      </Toolbar>
      <Browser>
        <NavPane>
          <Places>
            {places.map((p) => (
              <Place key={p.name} $head={p.head} $current={p.current} $spaced={p.spaced}>
                <PlaceLink href="#" aria-label={p.name || "Music"}>
                  <IconSlot>{p.icon}</IconSlot>
                  {p.name}
                </PlaceLink>
              </Place>
            ))}
          </Places>
          <Scrollbar vertical share={38} />
        </NavPane>
        <FilePane>
          <FileTable>
            <thead>
              <tr>
                <HeadCell $first>
                  Name
                  <SortMark>
                    <svg width="8" height="4">
                      <path d="M1 4 4 1l3 3z" fill="#4f93b8" />
                    </svg>
                  </SortMark>
                </HeadCell>
                <HeadCell $width={112}>Date modified</HeadCell>
                <HeadCell $width={6} aria-hidden="true" />
              </tr>
            </thead>
            <tbody>
              <tr>
                <FileCell>
                  <FileName>
                    <FileIcon />
                    ar_2-4_og.xprj
                  </FileName>
                </FileCell>
                <FileCell $muted>9/28/2010 11:31 AM</FileCell>
              </tr>
            </tbody>
          </FileTable>
          <Scrollbar share={62} />
        </FilePane>
      </Browser>
      <SaveForm>
        <FieldLabel htmlFor="file-name">File name:</FieldLabel>
        <NameBox>
          <NameInput id="file-name" defaultValue="C:\Users\engj\Desktop\xpresso-data\ar_2-4_og.xprj" />
          <DropButton type="button" aria-label="Previous names">
            <Arrow dir="down" color="#000" />
          </DropButton>
        </NameBox>
        <FieldLabel htmlFor="file-type">Save as type:</FieldLabel>
        <TypeBox>
          <TypeSelect id="file-type">
            <option>Xpresso Project files (*.xprj)</option>
          </TypeSelect>
          <Arrow dir="down" color="#000" />
        </TypeBox>
      </SaveForm>
      <DialogFooter>
        <HideFolders>
          <HideIcon />
          Hide Folders
        </HideFolders>
        <DialogButton $primary>Save</DialogButton>
        <DialogButton>Cancel</DialogButton>
      </DialogFooter>
      <ResizeGrip>
        <GripIcon />
      </ResizeGrip>
    </DialogBody>
  </Dialog>
);

export default function App() {
  return (
    <Window>
      <GlobalStyle />
      <TitleBar>
        <AppIcon size={14} />
        <WindowTitle>Xpresso Open Project: ar_2-4_og</WindowTitle>
        <CaptionButtons>
          <CaptionButton aria-label="Minimize">
            <svg width="10" height="10">
              <rect x=".5" y="6" width="9" height="3" fill="#fff" stroke="#445" strokeWidth=".5" />
            </svg>
          </CaptionButton>
          <CaptionButton aria-label="Restore">
            <svg width="11" height="11">
              <path d="M3.5 1.5h6v6H8M1.5 3.5h5.5v5.5H1.5z" fill="none" stroke="#fff" strokeWidth="1.5" />
            </svg>
          </CaptionButton>
          <CaptionButton aria-label="Close" $wide>
            <CloseGlyph size={9} />
          </CaptionButton>
        </CaptionButtons>
      </TitleBar>
      <MenuBar>
        <MenuButton>File</MenuButton>
        <MenuButton>Tools</MenuButton>
        <MenuButton>Help</MenuButton>
      </MenuBar>
      <Main>
        <div>
          <Tree />
          <Controls>
            <CutoffRow>
              <label htmlFor="cutoff">Probability Cutoff:</label>
              <CutoffInput id="cutoff" defaultValue="0.95" disabled />
            </CutoffRow>
            <PushButton type="button">Clear All Chromatograms</PushButton>
            <PushButton type="button" $focus>Save Progress</PushButton>
            <PushButton type="button">Update pep.xml</PushButton>
            <PushButton type="button">Check Peptides</PushButton>
            <PushButton type="button">Check Proteins</PushButton>
          </Controls>
        </div>
        <Workspace>
          <TabStrip>
            <TabClip role="tablist">
              {tabs.map((t) => (
                <Tab key={t} role="tab" $active={t === "VFEFGGPEVLK"} aria-selected={t === "VFEFGGPEVLK"}>
                  {t}
                </Tab>
              ))}
            </TabClip>
            <TabScroll aria-label="Scroll tabs left">
              <Arrow dir="left" color="#3a62a8" />
            </TabScroll>
            <TabScroll aria-label="Scroll tabs right">
              <Arrow dir="right" color="#3a62a8" />
            </TabScroll>
          </TabStrip>
          <TabPanel>
            <Charts />
          </TabPanel>
        </Workspace>
      </Main>
      <StatusBar />
      <SaveAsDialog />
    </Window>
  );
}
